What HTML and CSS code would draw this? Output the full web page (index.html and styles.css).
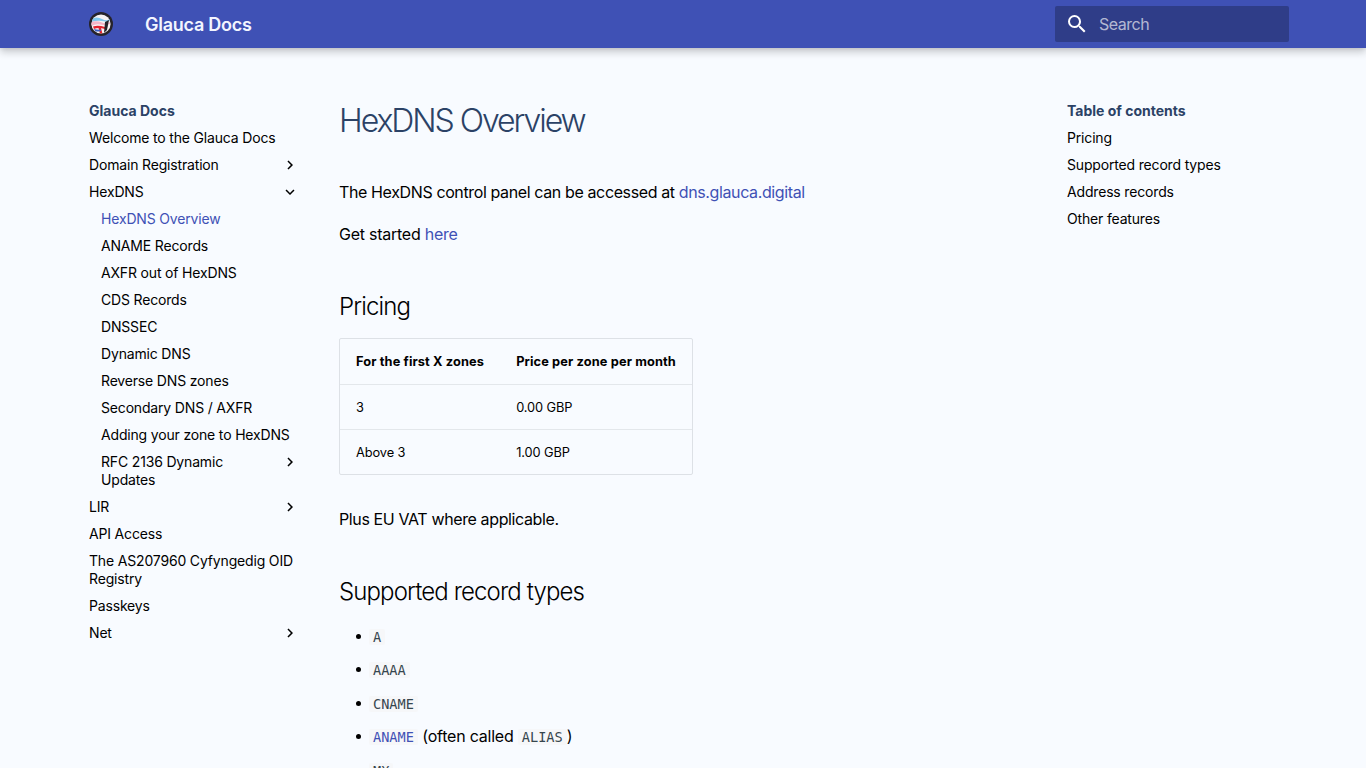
FILE: index.html
```html
<!DOCTYPE html>
<html lang="en">
<head>
<meta charset="utf-8">
<title>HexDNS Overview - Glauca Docs</title>
<link rel="stylesheet" href="styles.css">
</head>
<body>
<header class="header">
  <a class="logo" href="#" aria-label="Glauca Docs">
    <svg viewBox="0 0 24 24" width="24" height="24">
      <defs><clipPath id="logo-clip"><circle cx="12" cy="12" r="9.6"/></clipPath></defs>
      <circle cx="12" cy="12" r="12" fill="#26232a"/>
      <circle cx="12" cy="12" r="9.6" fill="#f7f3f4"/>
      <g clip-path="url(#logo-clip)">
        <path d="M2 7 Q8 4 13 7 T22 6 V8.5 Q17 10 13 9 T2 10Z" fill="#7fc8ee"/>
        <path d="M2 10 Q8 8.5 13 10.5 T21 10 V12 Q15 13.5 11 12.5 T2 14Z" fill="#f6b6c8"/>
        <path d="M4 14.5 Q9 13 16 15 L16 17 Q9 15 5 17Z" fill="#e2232e"/>
        <path d="M9.5 16 L12 16 L13.5 22 L11 22Z" fill="#e2232e"/>
        <path d="M16 10 L20 8 L18 18 L15 21Z" fill="#26242a"/>
        <path d="M5 17 Q9 18 12 17.5 L12 19 Q8 20 6 19Z" fill="#3d62c4"/>
      </g>
    </svg>
  </a>
  <span class="site-name">Glauca Docs</span>
  <form class="search">
    <svg class="search-icon" viewBox="0 0 24 24" width="24" height="24"><path d="M9.5 3A6.5 6.5 0 0 1 16 9.5c0 1.61-.59 3.09-1.56 4.23l.27.27h.79l5 5-1.5 1.5-5-5v-.79l-.27-.27A6.516 6.516 0 0 1 9.5 16 6.5 6.5 0 0 1 3 9.5 6.5 6.5 0 0 1 9.5 3m0 2C7 5 5 7 5 9.5S7 14 9.5 14 14 12 14 9.5 12 5 9.5 5Z"/></svg>
    <span class="search-label">Search</span>
  </form>
</header>

<div class="layout">
  <nav class="sidebar">
    <div class="nav-title">Glauca Docs</div>
    <ul class="nav-list">
      <li class="nav-row">Welcome to the Glauca Docs</li>
      <li class="nav-row nav-more">Domain Registration <svg class="chev" viewBox="0 0 24 24"><path d="M8.59 16.58 13.17 12 8.59 7.41 10 6l6 6-6 6-1.41-1.42Z"/></svg></li>
      <li class="nav-row nav-more">HexDNS <svg class="chev" viewBox="0 0 24 24"><path d="M7.41 8.58 12 13.17l4.59-4.59L18 10l-6 6-6-6 1.41-1.42Z"/></svg></li>
      <li>
        <ul class="nav-list nav-sub">
          <li class="nav-row nav-active">HexDNS Overview</li>
          <li class="nav-row">ANAME Records</li>
          <li class="nav-row">AXFR out of HexDNS</li>
          <li class="nav-row">CDS Records</li>
          <li class="nav-row">DNSSEC</li>
          <li class="nav-row">Dynamic DNS</li>
          <li class="nav-row">Reverse DNS zones</li>
          <li class="nav-row">Secondary DNS / AXFR</li>
          <li class="nav-row">Adding your zone to HexDNS</li>
          <li class="nav-row nav-more"><span class="nav-wrap">RFC 2136 Dynamic Updates</span> <svg class="chev" viewBox="0 0 24 24"><path d="M8.59 16.58 13.17 12 8.59 7.41 10 6l6 6-6 6-1.41-1.42Z"/></svg></li>
        </ul>
      </li>
      <li class="nav-row nav-more">LIR <svg class="chev" viewBox="0 0 24 24"><path d="M8.59 16.58 13.17 12 8.59 7.41 10 6l6 6-6 6-1.41-1.42Z"/></svg></li>
      <li class="nav-row">API Access</li>
      <li class="nav-row">The AS207960 Cyfyngedig OID Registry</li>
      <li class="nav-row">Passkeys</li>
      <li class="nav-row nav-more">Net <svg class="chev" viewBox="0 0 24 24"><path d="M8.59 16.58 13.17 12 8.59 7.41 10 6l6 6-6 6-1.41-1.42Z"/></svg></li>
    </ul>
  </nav>

  <main class="content">
    <h1>HexDNS Overview</h1>
    <p>The HexDNS control panel can be accessed at <a href="#">dns.glauca.digital</a></p>
    <p class="short">Get started <a href="#">here</a></p>
    <h2>Pricing</h2>
    <div class="table-box">
      <table>
        <thead><tr><th>For the first X zones</th><th>Price per zone per month</th></tr></thead>
        <tbody>
          <tr><td>3</td><td>0.00 GBP</td></tr>
          <tr><td>Above 3</td><td>1.00 GBP</td></tr>
        </tbody>
      </table>
    </div>
    <p>Plus EU VAT where applicable.</p>
    <h2>Supported record types</h2>
    <ul class="records">
      <li><code>A</code></li>
      <li><code>AAAA</code></li>
      <li><code>CNAME</code></li>
      <li><a href="#"><code>ANAME</code></a> (often called <code>ALIAS</code>)</li>
      <li><code>MX</code></li>
      <li><code>NS</code></li>
      <li><code>TXT</code></li>
    </ul>
  </main>

  <aside class="toc">
    <div class="nav-title">Table of contents</div>
    <ul class="nav-list">
      <li class="nav-row">Pricing</li>
      <li class="nav-row">Supported record types</li>
      <li class="nav-row">Address records</li>
      <li class="nav-row">Other features</li>
    </ul>
  </aside>
</div>
</body>
</html>
```

FILE: styles.css
```css
* { box-sizing: border-box; }
html { background: #f8fbff; }
body {
  margin: 0;
  background: #f8fbff;
  color: #000;
  font-family: Inter, "Liberation Sans", sans-serif;
  font-size: 16px;
  line-height: 1.6;
}
a { color: #3f51b5; text-decoration: none; }

.header {
  position: sticky;
  top: 0;
  z-index: 10;
  display: flex;
  align-items: center;
  height: 48px;
  padding: 0 77px 0 89px;
  background: #3f51b5;
  color: #fff;
  box-shadow: 0 0 4px rgba(0,0,0,.1), 0 4px 8px rgba(0,0,0,.2);
}
.logo { display: flex; width: 24px; height: 24px; }
.site-name {
  margin-left: 32px;
  padding-top: 2px;
  font-size: 18px;
  font-weight: 600;
  line-height: 24px;
  letter-spacing: -.25px;
  color: #f3f5ff;
}
.search {
  display: flex;
  align-items: center;
  width: 234px;
  height: 36px;
  margin-left: auto;
  padding-left: 10px;
  border-radius: 2px;
  background: #2f3d88;
}
.search-icon { fill: #fff; flex: none; }
.search-label {
  margin-left: 10px;
  padding-top: 2px;
  font-size: 16px;
  letter-spacing: -.5px;
  color: rgba(255,255,255,.65);
}

.layout {
  display: flex;
  align-items: flex-start;
  padding: 0 77px 0 89px;
}
.sidebar { flex: none; width: 250px; padding: 54px 42px 0 0; }
.content { flex: none; width: 728px; padding: 44px 0 40px; }
.toc { flex: 1; padding-top: 54px; }

.nav-title {
  font-size: 14px;
  font-weight: 700;
  line-height: 18px;
  color: #2b4266;
  margin-bottom: 9px;
}
.nav-list { list-style: none; margin: 0; padding: 0; }
.nav-row {
  font-size: 14px;
  line-height: 18px;
  letter-spacing: -.17px;
  color: #000;
  margin-bottom: 9px;
}
.nav-more { display: flex; justify-content: space-between; align-items: flex-start; }
.chev { width: 18px; height: 18px; fill: #000; flex: none; margin-right: -2px; }
.nav-sub { padding-left: 12px; }
.nav-wrap { width: 140px; }
.nav-active { color: #3f51b5; }

h1 {
  margin: 0 0 38px;
  padding-top: 8px;
  font-size: 32px;
  font-weight: 300;
  line-height: 1.3;
  letter-spacing: -2.05px;
  color: #2b4266;
}
h2 {
  margin: 44px 0 14px;
  font-size: 24px;
  font-weight: 300;
  line-height: 1.35;
  letter-spacing: -.88px;
}
p { margin: 0 0 16.4px; letter-spacing: -.38px; }
.short { letter-spacing: -.25px; }

.table-box {
  display: inline-block;
  border: 1px solid #dde1e6;
  border-radius: 2px;
  margin-bottom: 32px;
  vertical-align: top;
}
table { border-collapse: collapse; font-size: 12.8px; line-height: 1.5; }
th, td { text-align: left; }
th { padding: 13px 16px; font-weight: 700; letter-spacing: .125px; }
td { padding: 13px 16px 11.8px; letter-spacing: -.1px; }
tbody td { border-top: 1px solid #e3e7eb; }

.records { list-style: none; margin: 15px 0 0; padding-left: 30px; letter-spacing: -.22px; }
.records li { position: relative; margin-bottom: 8px; }
.records li::before {
  content: "";
  position: absolute;
  left: -13.5px;
  top: 10px;
  width: 5px;
  height: 5px;
  border-radius: 50%;
  background: #000;
}
code {
  font-family: "DejaVu Sans Mono", "Liberation Mono", monospace;
  font-size: 13.6px;
  letter-spacing: 0;
  color: #36464e;
  background: #f6f7f9;
  padding: 0 4px;
  border-radius: 2px;
}
a code { color: #3f51b5; }
```
